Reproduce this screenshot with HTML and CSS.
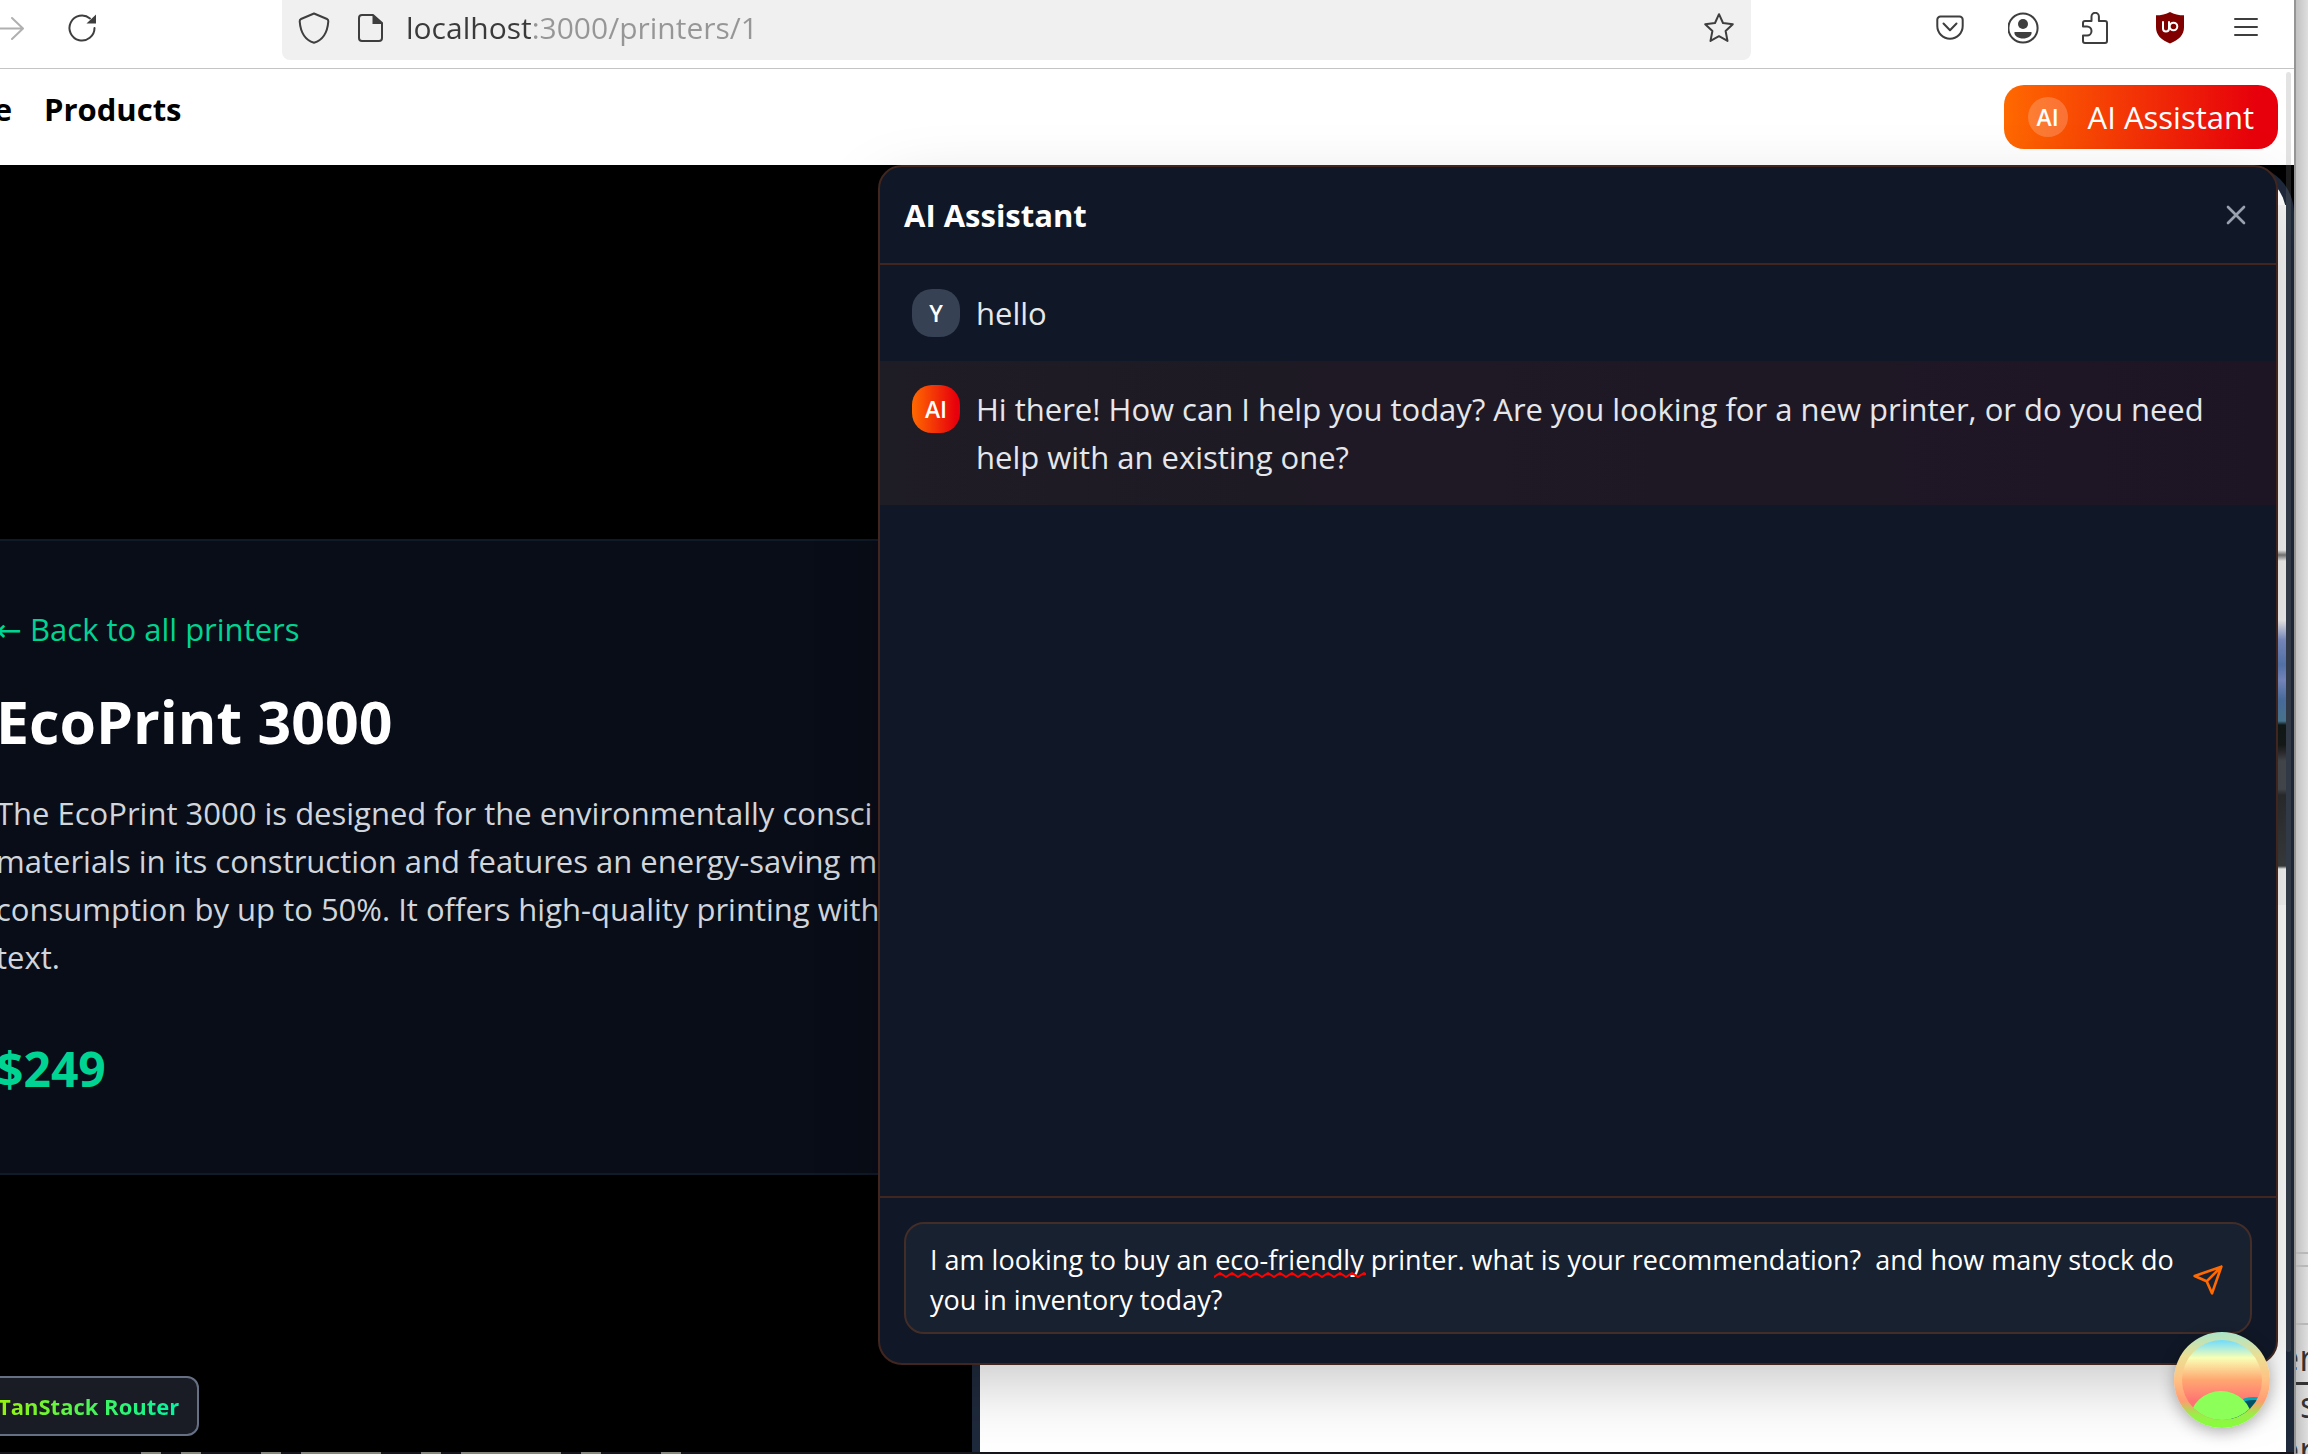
FILE: index.html
```html
<!DOCTYPE html>
<html lang="en">
<head>
<meta charset="utf-8">
<title>EcoPrint 3000</title>
<link rel="stylesheet" href="styles.css">
</head>
<body>
<div class="desktop">
  <div class="window">
    <header class="toolbar">
      <div class="toolbar-nav">
        <button class="tool" aria-label="Forward"><svg class="faded" width="32" height="32" viewBox="0 0 32 32"><path d="M0 16.500h26M16 6l11 10.500L16 27" /></svg></button>
        <button class="tool" aria-label="Reload"><svg width="32" height="32" viewBox="0 0 32 32"><path d="M28.500 16a12.500 12.500 0 1 1-4.500-9.600" /><path class="solid" d="M30 2.500v9h-9.500z" /></svg></button>
      </div>
      <div class="urlbar">
        <svg width="32" height="32" viewBox="0 0 32 32"><path d="M16 1.500 29 7q1.500.7 1.300 2.500C29.500 20 25 28 16 30.800 7 28 2.500 20 1.700 9.500 1.500 7.700 3 7 3 7z" /></svg>
        <svg width="32" height="32" viewBox="0 0 32 32"><path d="M19 3H8a3 3 0 0 0-3 3v20a3 3 0 0 0 3 3h17a3 3 0 0 0 3-3V11z" /><path class="solid" d="M18.500 2.500v9.500h10z" /></svg>
        <input class="url" type="text" aria-label="Address" value="localhost:3000/printers/1">
        <button class="tool" aria-label="Bookmark"><svg width="32" height="32" viewBox="0 0 32 32"><path d="M16 2.200 20 11l9.800 1.200-7.200 6.800 1.900 9.900L16 24.200l-8.500 4.700L9.400 19 2.200 12.200 12 11z" /></svg></button>
      </div>
      <div class="toolbar-actions">
        <button class="tool" aria-label="Pocket"><svg width="32" height="32" viewBox="0 0 32 32"><path d="M6.500 4.500h19a3.200 3.200 0 0 1 3.200 3.200V14a12.700 12.700 0 0 1-25.400 0V7.700a3.200 3.200 0 0 1 3.200-3.200z" /><path d="m9.500 11.500 6.500 6.800 6.500-6.800" /></svg></button>
        <button class="tool" aria-label="Account"><svg width="32" height="32" viewBox="0 0 32 32"><circle cx="15" cy="16" r="14.600" /><circle class="solid" cx="15" cy="12" r="5" /><path class="solid" d="M6.500 20h17c.8 4-4 6.500-8.500 6.500S5.700 24 6.500 20z" /></svg></button>
        <button class="tool" aria-label="Extensions"><svg width="32" height="32" viewBox="0 0 32 32"><path d="M1 14.500V11a2 2 0 0 1 2-2h6.500V4.500a3.700 3.700 0 0 1 7.400 0V9H23a2 2 0 0 1 2 2v18a2 2 0 0 1-2 2H3a2 2 0 0 1-2-2v-5.500h4a4.500 4.500 0 0 0 0-9z" /></svg></button>
        <button class="tool" aria-label="uBlock Origin"><svg width="32" height="32" viewBox="0 0 32 32"><path class="ublock" d="M14 0c4 2.500 9 3.300 14 3.300v12C28 23 23 28 14 31.500 5 28 0 23 0 15.300v-12C5 3.300 10 2.500 14 0z" /><path class="ublock-mark" d="M7 10v6.500a3 3 0 0 0 6 0V10" /><circle class="ublock-mark" cx="17.500" cy="14.500" r="3.800" /></svg></button>
        <button class="tool" aria-label="Menu"><svg width="32" height="32" viewBox="0 0 32 32"><path d="M5 7h22M5 15h22M5 23h22" /></svg></button>
      </div>
    </header>

    <nav class="site-nav">
      <div class="site-links">
        <a href="#home" class="home">Home</a>
        <a href="#products">Products</a>
      </div>
      <button class="assistant-button"><span class="badge">AI</span>AI Assistant</button>
    </nav>

    <main class="page">
      <section class="product">
        <a class="back" href="#printers"><span class="arrow">←</span> Back to all printers</a>
        <h1>EcoPrint 3000</h1>
        <p class="description">The EcoPrint 3000 is designed for the environmentally consci<br>materials in its construction and features an energy-saving mo<br>consumption by up to 50%. It offers high-quality printing with<br>text.</p>
        <p class="price">$249</p>
      </section>
      <div class="photo-frame"><div class="photo"></div></div>

      <aside class="chat">
        <header class="chat-header">
          <h2>AI Assistant</h2>
          <button class="tool close" aria-label="Close"><svg width="32" height="32" viewBox="0 0 24 24"><path d="M18 6 6 18M6 6l12 12" /></svg></button>
        </header>
        <div class="messages">
          <div class="message"><span class="avatar">Y</span><p>hello</p></div>
          <div class="message reply"><span class="avatar">AI</span><p>Hi there! How can I help you today? Are you looking for a new printer, or do you need help with an existing one?</p></div>
        </div>
        <form class="composer">
          <div class="field">
            <textarea aria-label="Message" spellcheck="false" rows="2">I am looking to buy an eco-friendly printer. what is your recommendation?  and how many stock do you in inventory today?</textarea>
            <svg class="squiggle" width="152" height="6"><defs><pattern id="wave" width="12" height="6" patternUnits="userSpaceOnUse"><path d="M0 5 6 1l6 4" /></pattern></defs><rect width="152" height="6" fill="url(#wave)" /></svg>
            <button class="tool send" type="button" aria-label="Send"><svg width="32" height="32" viewBox="0 0 24 24"><path d="m22 2-7 20-4-9-9-4ZM22 2 11 13" /></svg></button>
          </div>
        </form>
      </aside>

      <button class="router-button"><span>TanStack Router</span></button>
      <button class="query-button" aria-label="Open query devtools">
        <svg width="96" height="96" viewBox="0 0 96 96">
          <defs>
            <linearGradient id="ring" x1="0" y1="0" x2="0" y2="1"><stop offset="0" stop-color="#a9e5cb" /><stop offset=".25" stop-color="#ecdf93" /><stop offset=".5" stop-color="#ffc083" /><stop offset=".72" stop-color="#ff9c72" /><stop offset=".86" stop-color="#9bee48" /><stop offset="1" stop-color="#83ff3b" /></linearGradient>
            <linearGradient id="sky" x1="0" y1="0" x2="0" y2="1"><stop offset=".08" stop-color="#6bdaff" /><stop offset=".27" stop-color="#f9ffb5" /><stop offset=".5" stop-color="#ffa770" /><stop offset=".72" stop-color="#ff7373" /><stop offset="1" stop-color="#ff7373" /></linearGradient>
            <clipPath id="disc"><circle cx="48" cy="48" r="40" /></clipPath>
          </defs>
          <circle cx="48" cy="48" r="48" fill="url(#ring)" />
          <g clip-path="url(#disc)">
            <rect width="96" height="96" fill="url(#sky)" />
            <ellipse cx="80" cy="82" rx="24" ry="17" fill="#00a8b8" />
            <ellipse cx="80" cy="86" rx="24" ry="18" fill="#015064" />
            <ellipse cx="47" cy="88" rx="31" ry="29" fill="#8cff59" />
          </g>
        </svg>
      </button>
      <div class="scroll-thumb"></div>
    </main>
    <div class="window-below"></div>
  </div>
  <div class="behind">
    <div class="behind-page">
      <p>er</p>
      <p class="ruled">s,</p>
      <p>er</p>
    </div>
  </div>
</div>
</body>
</html>
```
FILE: styles.css
```css
* { box-sizing: border-box; }

body {
  margin: 0;
  overflow: hidden;
  font-family: "Open Sans", "Noto Sans", sans-serif;
  font-size: 31px;
  line-height: 48px;
  color: #e5e7eb;
}

h1, h2, p { margin: 0; }
a { color: inherit; text-decoration: none; }
svg { display: block; flex: none; }

button {
  border: 0;
  padding: 0;
  background: none;
  color: inherit;
  font: inherit;
}

.desktop {
  display: grid;
  grid-template-columns: 1fr 14px;
  height: 100vh;
}

.window {
  display: flex;
  flex-direction: column;
  min-width: 0;
  overflow: hidden;
  background: #fff;
}

/* Browser toolbar */
.toolbar {
  display: flex;
  height: 69px;
  flex: none;
  border-bottom: 1px solid #c4c4c4;
}

.tool { flex: none; width: 32px; height: 32px; }

.toolbar svg {
  fill: none;
  stroke: #3e3e3e;
  stroke-width: 2;
  stroke-linecap: round;
  stroke-linejoin: round;
}
.toolbar .faded { stroke: #b0b0b0; }
.toolbar .solid { fill: #3e3e3e; stroke: none; }
.toolbar .ublock { fill: #800000; stroke: none; }
.toolbar .ublock-mark { stroke: #fff; }

.toolbar-nav, .toolbar-actions {
  display: flex;
  align-items: center;
  gap: 42px;
  height: 56px;
}
.toolbar-nav { width: 282px; margin-left: -4px; padding-right: 4px; gap: 38px; }
.toolbar-actions { width: 543px; justify-content: flex-end; padding-right: 32px; }

.urlbar {
  display: flex;
  flex: 1;
  align-items: center;
  gap: 24px;
  height: 60px;
  margin-left: 4px;
  padding: 0 16px 4px;
  border-radius: 0 0 8px 8px;
  background: #f0f0f0;
}

.url {
  flex: 1;
  min-width: 0;
  height: 48px;
  margin-left: -4px;
  padding: 0;
  border: 0;
  background: linear-gradient(90deg, #3a3a3a 127px, #969696 127px);
  background-clip: text;
  color: transparent;
  font: inherit;
  font-size: 30px;
}

/* Site navigation */
.site-nav {
  display: flex;
  align-items: center;
  justify-content: space-between;
  flex: none;
  height: 96px;
  padding-right: 16px;
  color: #000;
}

.site-links {
  display: flex;
  gap: 32px;
  margin-bottom: 16px;
  font-weight: 700;
}
.home { width: 12px; direction: rtl; white-space: nowrap; }

.assistant-button {
  display: flex;
  align-items: center;
  gap: 20px;
  height: 64px;
  padding: 0 24px;
  border-radius: 20px;
  background: linear-gradient(90deg, #ff6900, #e7000b 92%);
  color: #fff;
}

.badge {
  width: 40px;
  border-radius: 20px;
  background: rgba(255, 255, 255, .2);
  font-size: 23px;
  font-weight: 600;
  line-height: 40px;
}

/* Product page */
.page {
  position: relative;
  display: grid;
  grid-template-columns: 972fr 1322fr;
  flex: 1;
  min-height: 0;
  background: #000;
}

.product {
  display: flex;
  flex-direction: column;
  gap: 32px;
  align-self: start;
  min-width: 0;
  margin: 374px 0 0 -4px;
  padding: 64px 0 72px;
  border: solid #101a28;
  border-width: 2px 0;
  background: #090d17;
  white-space: nowrap;
}

.back { height: 48px; color: #00d492; }
.arrow { font-family: "DejaVu Sans", sans-serif; line-height: 40px; }
h1 { font-size: 59px; line-height: 72px; color: #fff; }
.description { color: #d1d5dc; }
.price {
  margin: 24px 0 0;
  font-size: 48px;
  font-weight: 700;
  line-height: 64px;
  color: #00d492;
}

.photo-frame {
  border: 8px solid #1e293b;
  border-width: 8px 8px 0;
  border-radius: 48px 48px 0 0;
  background: #fff;
}

.photo {
  height: 700px;
  margin-top: 32px;
  background: linear-gradient(#f7f7f7 345px, #777 350px, #f4f4f4 356px, #f4f4f4 415px, #7f91c8 435px, #5a7bb5 460px, #7d8fc9 475px, #4d74a8 495px, #4d7d98 516px, #111a17 520px, #161c1a 540px, #302e33 548px, #474b50 556px, #474b50 584px, #2b2c2e 590px, #3a3d3e 661px, #f7f7f7 664px);
}

/* Chat panel floats over the product page */
.chat {
  position: absolute;
  top: 0;
  right: 16px;
  display: flex;
  flex-direction: column;
  width: 1400px;
  max-width: 100%;
  height: 1200px;
  border: 2px solid #40261f;
  border-radius: 24px;
  background: #101726;
  box-shadow: 0 24px 72px -12px rgba(0, 0, 0, .25);
}

.chat-header {
  display: flex;
  align-items: center;
  justify-content: space-between;
  height: 98px;
  padding: 0 24px;
  border-bottom: 2px solid #40261f;
}
h2 { font-size: 31px; line-height: 48px; color: #fff; }

.chat svg {
  fill: none;
  stroke: #99a1af;
  stroke-width: 2;
  stroke-linecap: round;
  stroke-linejoin: round;
}

.messages { flex: 1; }

.message {
  display: flex;
  gap: 16px;
  padding: 24px 32px;
}
.reply { background: linear-gradient(90deg, #1e1c25, #1e1524); }
.message p { max-width: 1250px; }

.avatar {
  flex: none;
  width: 48px;
  height: 48px;
  border-radius: 20px;
  background: #364153;
  color: #fff;
  font-size: 23px;
  font-weight: 600;
  text-align: center;
}
.reply .avatar { background: linear-gradient(90deg, #ff6900, #e7000b 92%); }

.composer {
  padding: 24px 24px 29px;
  border-top: 2px solid #40261f;
}

.field { position: relative; }

textarea {
  display: block;
  width: 100%;
  height: 112px;
  padding: 16px 72px 12px 24px;
  overflow: hidden;
  border: 2px solid #432d28;
  border-radius: 20px;
  background: #182130;
  color: #fff;
  font: inherit;
  font-size: 27px;
  line-height: 40px;
  resize: none;
}

.squiggle {
  position: absolute;
  top: 50px;
  left: 310px;
}
.chat .squiggle path { stroke: #f00; }
.chat .squiggle rect { stroke: none; }

.send {
  position: absolute;
  top: 42px;
  right: 28px;
}
.chat .send svg { stroke: #ff6900; }

/* Devtools launchers and scrollbar float over the page */
.router-button {
  position: absolute;
  bottom: 16px;
  left: -16px;
  height: 60px;
  padding: 0 18px 0 12px;
  border: 2px solid #667085;
  border-radius: 12px;
  background: #191c24;
  font-size: 22px;
  font-weight: 700;
}
.router-button span {
  background: linear-gradient(90deg, #98f30c, #00f4a3);
  background-clip: text;
  color: transparent;
}

.query-button {
  position: absolute;
  right: 24px;
  bottom: 24px;
  border-radius: 50%;
  box-shadow: 0 4px 16px rgba(0, 0, 0, .3);
}

.scroll-thumb {
  position: absolute;
  top: -93px;
  right: 3px;
  width: 5px;
  height: 1280px;
  border-radius: 3px;
  background: rgba(128, 128, 128, .22);
}

/* Top pixel rows of the terminal under the window */
.window-below {
  flex: none;
  height: 2px;
  background:
    linear-gradient(90deg, transparent 141px, #85857b 141px 161px, transparent 161px 181px, #85857b 181px 201px, transparent 201px 261px, #85857b 261px 281px, transparent 281px 301px, #85857b 301px 381px, transparent 381px 421px, #85857b 421px 441px, transparent 441px 461px, #85857b 461px 561px, transparent 561px 581px, #85857b 581px 601px, transparent 601px 661px, #85857b 661px 681px, transparent 681px),
    #15151c;
}

/* Sliver of the window behind */
.behind {
  display: flex;
  flex-direction: column;
  justify-content: flex-end;
  overflow: hidden;
  border-left: 2px solid #959595;
  background: linear-gradient(90deg, #c2c2c2, #dedede);
}

.behind-page {
  height: 202px;
  padding-top: 82px;
  background:
    linear-gradient(#b8b8b8 2px, transparent 2px 13px, #b8b8b8 13px 15px, transparent 15px 71px, #b8b8b8 71px 73px, transparent 73px);
  color: #333;
  font-size: 36px;
}
.behind-page p { width: 12px; text-indent: -17px; white-space: nowrap; }
.behind-page .ruled { border-top: 3px solid #333; height: 44px; line-height: 40px; text-indent: 4px; }
```
